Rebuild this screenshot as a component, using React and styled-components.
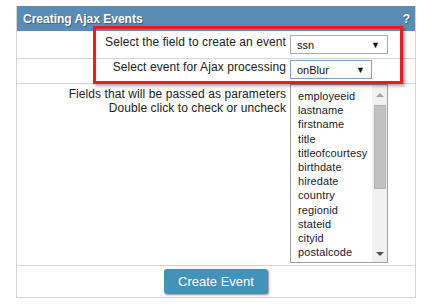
import React from "react";
import styled, { createGlobalStyle } from "styled-components";

const Global = createGlobalStyle`
  html, body { margin: 0; padding: 0; background: #fff; }
  body { font-family: "Liberation Sans", Arial, sans-serif; }
`;

const Page = styled.div`
  padding: 6px 0 0 16px;
`;

const Panel = styled.div`
  position: relative;
  width: 398px;
  border: 1px solid #d4d4d4;
  border-top: none;
  background: #fff;
`;

const Header = styled.div`
  height: 25px;
  background: #5a8cb6;
  color: #fff;
  font-weight: bold;
  font-size: 12px;
  display: flex;
  align-items: center;
  justify-content: space-between;
  padding: 0 5px 0 6px;
  text-shadow: 1px 1px 1px rgba(0, 0, 0, 0.35);
`;

const Row = styled.div`
  display: grid;
  grid-template-columns: 273px 1fr;
  height: ${(p) => p.$h}px;
  padding-top: ${(p) => p.$pt}px;
  box-sizing: border-box;
  border-bottom: 1px solid #d4d4d4;
`;

const Label = styled.div`
  text-align: right;
  padding-right: 4px;
  padding-top: ${(p) => p.$pt || 0}px;
  font-size: 12px;
  letter-spacing: 0.08px;
  line-height: 14px;
  color: #222;
`;

const Select = styled.div`
  box-sizing: border-box;
  width: ${(p) => p.$w}px;
  height: 19px;
  border: 1px solid ${(p) => (p.$focus ? "#7da2ce" : "#a9a9a9")};
  display: flex;
  align-items: center;
  justify-content: space-between;
  padding: 0 ${(p) => p.$pr}px 0 6px;
  font-size: 11px;
  color: #111;
  background: #fff;
`;

const Arrow = styled.span`
  font-size: 9px;
  color: #111;
`;

const ListBox = styled.div`
  box-sizing: border-box;
  width: 98px;
  height: 179px;
  border: 1px solid #a0a0a0;
  display: flex;
  background: #fff;
`;

const Options = styled.div`
  flex: 1;
  overflow: hidden;
  padding: 4px 0 0 7px;
`;

const Option = styled.div`
  font-size: 11px;
  line-height: 14.2px;
  letter-spacing: 0.1px;
  color: #1a1a2a;
  white-space: nowrap;
`;

const ScrollBar = styled.div`
  width: 15px;
  background: #f0f0f0;
  display: flex;
  flex-direction: column;
  align-items: center;
`;

const ScrollBtn = styled.div`
  height: ${(p) => p.$h}px;
  display: flex;
  align-items: center;
  justify-content: center;
`;

const Thumb = styled.div`
  box-sizing: border-box;
  width: 12px;
  height: 84px;
  background: #c1c1c1;
  border: 1px solid #b4b4b4;
`;

const Spacer = styled.div`
  flex: 1;
`;

const Tri = styled.div`
  width: 0;
  height: 0;
  border-left: 4px solid transparent;
  border-right: 4px solid transparent;
  ${(p) =>
    p.$up
      ? `border-bottom: 4px solid ${p.$c};`
      : `border-top: 4px solid ${p.$c};`}
`;

const Footer = styled.div`
  display: flex;
  justify-content: center;
  height: 31px;
  padding-top: 3px;
  box-sizing: border-box;
`;

const Button = styled.button`
  width: 104px;
  height: 25px;
  border: none;
  border-radius: 3px;
  background: #4392b8;
  color: #fff;
  font-family: "Liberation Sans", Arial, sans-serif;
  font-size: 13px;
  padding: 0;
  box-shadow: 1px 1px 2px rgba(0, 0, 0, 0.45);
`;

const Highlight = styled.div`
  position: absolute;
  left: 76px;
  top: 20px;
  width: 310px;
  height: 58px;
  box-sizing: border-box;
  border: 3px solid #ee1b1b;
  box-shadow: 2px 2px 3px rgba(0, 0, 0, 0.35);
  pointer-events: none;
`;

const fields = [
  "employeeid",
  "lastname",
  "firstname",
  "title",
  "titleofcourtesy",
  "birthdate",
  "hiredate",
  "country",
  "regionid",
  "stateid",
  "cityid",
  "postalcode",
];

export default function App() {
  return (
    <>
      <Global />
      <Page>
        <Panel>
          <Header>
            <span>Creating Ajax Events</span>
            <span>?</span>
          </Header>
          <Row $h={28} $pt={4}>
            <Label>Select the field to create an event</Label>
            <div>
              <Select $w={98} $pr={7}>
                <span>ssn</span>
                <Arrow>▼</Arrow>
              </Select>
            </div>
          </Row>
          <Row $h={25} $pt={1}>
            <Label>Select event for Ajax processing</Label>
            <div>
              <Select $w={82} $pr={6} $focus>
                <span>onBlur</span>
                <Arrow>▼</Arrow>
              </Select>
            </div>
          </Row>
          <Row $h={182} $pt={0}>
            <Label $pt={3}>
              Fields that will be passed as parameters
              <br />
              Double click to check or uncheck
            </Label>
            <div>
              <ListBox>
                <Options>
                  {fields.map((f) => (
                    <Option key={f}>{f}</Option>
                  ))}
                </Options>
                <ScrollBar>
                  <ScrollBtn $h={20}>
                    <Tri $up $c="#a3a3a3" />
                  </ScrollBtn>
                  <Thumb />
                  <Spacer />
                  <ScrollBtn $h={17}>
                    <Tri $c="#505050" />
                  </ScrollBtn>
                </ScrollBar>
              </ListBox>
            </div>
          </Row>
          <Footer>
            <Button>Create Event</Button>
          </Footer>
          <Highlight />
        </Panel>
      </Page>
    </>
  );
}
